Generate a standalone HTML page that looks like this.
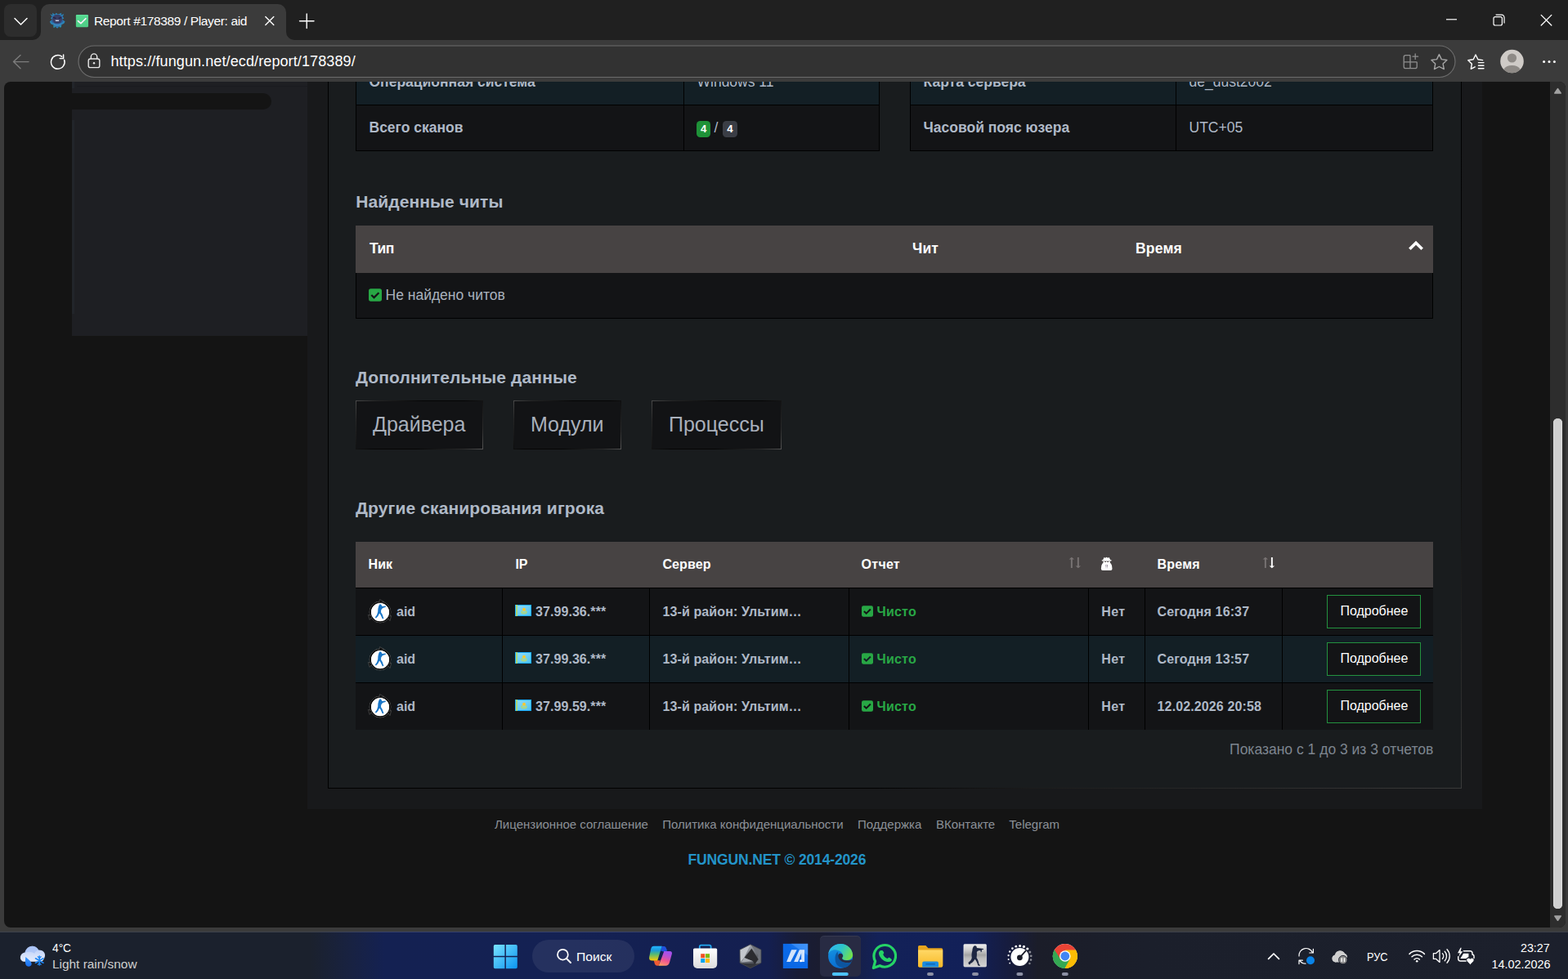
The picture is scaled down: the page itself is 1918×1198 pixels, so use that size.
<!DOCTYPE html>
<html lang="ru">
<head>
<meta charset="utf-8">
<title>Report #178389 / Player: aid</title>
<style>
*{box-sizing:border-box;margin:0;padding:0}
html,body{width:1918px;height:1198px;overflow:hidden;background:#3b3b3b;font-family:"Liberation Sans",Arial,sans-serif}
#root{position:relative;width:1918px;height:1198px;overflow:hidden}
#root div,#root span,#root svg,#root a,#root h4,#root button{position:absolute;display:block}
.t{white-space:nowrap;line-height:1;text-decoration:none}
svg{overflow:visible}
</style>
</head>
<body>
<div id="root">

<div style="left:0px;top:0px;width:1918px;height:49px;background:#202020;"></div>
<div style="left:0px;top:49px;width:1918px;height:1091px;background:#3b3b3b;"></div>
<div style="left:5px;top:5px;width:40px;height:40px;background:#2d2d2d;border-radius:8px;"></div>
<svg style="left:0;top:0" width="1918" height="100" viewBox="0 0 1918 100">
<path d="M40 49 A10 10 0 0 0 50 39 V15 A10 10 0 0 1 60 5 H340 A10 10 0 0 1 350 15 V39 A10 10 0 0 0 360 49 Z" fill="#3b3b3b"/>
<!-- chevron -->
<path d="M18 22.5 L25.5 30 L33 22.5" fill="none" stroke="#fff" stroke-width="1.5" stroke-linecap="round" stroke-linejoin="round"/>
<!-- favicon -->
<g transform="translate(52 8) scale(0.036496)">
<path d="M255 250 L340 290 L330 215 L420 265 L455 215 L520 260 L640 215 L620 285 L715 250 L680 340 L720 400 L650 430 L755 500 L720 570 L640 610 L625 700 L560 670 L495 730 L430 680 L365 710 L370 620 L280 580 L240 510 L330 430 L270 390 L320 340 Z" fill="#2a8cc4" opacity=".9"/>
<path d="M300 300 L380 330 L400 260 L495 300 L590 260 L610 330 L690 300 L650 400 L700 500 L620 560 L600 660 L495 690 L390 660 L370 560 L290 500 L340 400 Z" fill="#2e5f9e"/>
<ellipse cx="495" cy="420" rx="165" ry="150" fill="#3a3f66"/>
<path d="M360 370 L450 395 M630 370 L540 395" stroke="#231f3a" stroke-width="34"/>
<path d="M425 450 H555 L545 495 H440 Z" fill="#c9d2e4"/>
<path d="M350 545 Q495 640 640 545 L600 640 Q495 700 390 640 Z" fill="#3b86bd"/>
<path d="M365 640 L395 715 L430 660 Z M625 640 L595 715 L560 660 Z" fill="#2a9c9c"/>
</g>
<!-- green check emoji -->
<g transform="translate(52 8) scale(0.036496)">
<defs><linearGradient id="gchk" x1="0" y1="0" x2="0" y2="1"><stop offset="0" stop-color="#5fe09b"/><stop offset=".2" stop-color="#53d68d"/><stop offset="1" stop-color="#4fcd86"/></linearGradient></defs>
<rect x="1120" y="275" width="415" height="415" rx="30" fill="url(#gchk)"/>
<path d="M1190 482 L1285 566 L1452 402" fill="none" stroke="#fdeffa" stroke-width="42" stroke-linecap="round" stroke-linejoin="round"/>
</g>
<!-- tab close -->
<path d="M324.8 20.5 L334.8 30.5 M334.8 20.5 L324.8 30.5" stroke="#fff" stroke-width="1.4" stroke-linecap="round"/>
<!-- new tab -->
<path d="M366.5 25.7 H384 M375.2 17 V34.5" stroke="#fff" stroke-width="1.4" stroke-linecap="round"/>
<!-- window controls -->
<path d="M1769 23.8 H1782" stroke="#fff" stroke-width="1.2"/>
<rect x="1827" y="20.6" width="10.4" height="10.4" rx="2" fill="none" stroke="#fff" stroke-width="1.2"/>
<path d="M1829.6 18.2 H1837 A3 3 0 0 1 1840 21.2 V28.6" fill="none" stroke="#fff" stroke-width="1.2"/>
<path d="M1885.2 18.4 L1897.8 31 M1897.8 18.4 L1885.2 31" stroke="#fff" stroke-width="1.3" stroke-linecap="round"/>
<!-- back -->
<path d="M35 75.6 H16.5 M25 67.4 L16.5 75.6 L25 83.8" fill="none" stroke="#7d7d7d" stroke-width="1.4" stroke-linecap="round" stroke-linejoin="round"/>
<!-- reload -->
<path d="M78.6 73.2 A8.3 8.3 0 1 1 75.6 69.2" fill="none" stroke="#fff" stroke-width="1.5" stroke-linecap="round"/>
<path d="M77.6 67 V71.4 H73.2" fill="none" stroke="#fff" stroke-width="1.5" stroke-linecap="round" stroke-linejoin="round"/>
<!-- url bar -->
<rect x="96" y="56" width="1684" height="38.5" rx="19.25" fill="#323232" stroke="#6c6c6c" stroke-width="1.2"/>
<!-- lock -->
<rect x="108.2" y="72" width="13.6" height="10.6" rx="2.2" fill="none" stroke="#e8e8e8" stroke-width="1.4"/>
<path d="M111.3 72 V69.6 A3.7 3.7 0 0 1 118.7 69.6 V72" fill="none" stroke="#e8e8e8" stroke-width="1.4"/>
<circle cx="115" cy="77.3" r="1.2" fill="#e8e8e8"/>
<!-- apps-add -->
<g fill="none" stroke="#8f8f8f" stroke-width="1.3" stroke-linejoin="round">
<path d="M1725 67.6 H1719.4 A2.2 2.2 0 0 0 1717.2 69.8 V81.4 A2.2 2.2 0 0 0 1719.4 83.6 H1731 A2.2 2.2 0 0 0 1733.2 81.4 V75.8"/>
<path d="M1725 67.6 V83.6 M1717.2 75.8 H1733.2"/>
<path d="M1731.2 66 V72.4 M1728 69.2 H1734.6" stroke-linecap="round"/>
</g>
<!-- star -->
<path d="M1760.4 66.6 L1763.3 72.6 L1769.9 73.5 L1765.1 78.1 L1766.3 84.6 L1760.4 81.5 L1754.5 84.6 L1755.7 78.1 L1750.9 73.5 L1757.5 72.6 Z" fill="none" stroke="#a6a6a6" stroke-width="1.4" stroke-linejoin="round"/>
<!-- favorites -->
<path d="M1805 67 L1807.9 72.8 L1813.6 73.6 M1805 67 L1802.2 72.8 L1795.8 73.7 L1800.4 78.2 L1799.3 84.4 L1804.2 81.8" fill="none" stroke="#fff" stroke-width="1.4" stroke-linejoin="round" stroke-linecap="round"/>
<path d="M1808.4 76.6 H1815 M1808.4 80.2 H1815 M1808.4 83.8 H1815" stroke="#fff" stroke-width="1.4" stroke-linecap="round"/>
<!-- avatar -->
<circle cx="1849.5" cy="75" r="14.3" fill="#cfcbc7"/>
<circle cx="1849.5" cy="71" r="5.6" fill="#8e8a86"/>
<path d="M1839.3 85 A11 8 0 0 1 1859.7 85 A14.3 14.3 0 0 1 1839.3 85 Z" fill="#8e8a86"/>
<!-- dots -->
<circle cx="1888.6" cy="75.5" r="1.5" fill="#fff"/><circle cx="1895" cy="75.5" r="1.5" fill="#fff"/><circle cx="1901.4" cy="75.5" r="1.5" fill="#fff"/>
</svg>
<div class="t" style="top:18.00px;font-size:15.5px;color:#fff;left:115px;letter-spacing:-0.37px;">Report #178389 / Player: aid</div>
<div class="t" style="top:66.00px;font-size:18px;color:#fff;left:135.5px;letter-spacing:0.11px;">https://fungun.net/ecd/report/178389/</div>
<div id="page" style="left:5px;top:100px;width:1909.5px;height:1035px;background:#141414;border-radius:8px;overflow:hidden">
<div style="left:-5px;top:-100px;width:1918px;height:1198px">
<div style="left:88px;top:100px;width:288px;height:311px;background:#1e1f23;"></div>
<div style="left:88px;top:114px;width:244px;height:20px;background:#141414;border-radius:0 10px 10px 0;"></div>
<div style="left:88px;top:100px;width:3px;height:8px;background:#22252a;"></div>
<div style="left:88px;top:147px;width:3px;height:237px;background:#22252a;"></div>
<div style="left:94px;top:105px;width:282px;height:1px;background:#1a1b1f;"></div>
<div style="left:376px;top:100px;width:1437px;height:890px;background:#18191b;"></div>
<div style="left:401px;top:90px;width:1387px;height:875px;background:#191c1e;border:1px solid #000;"></div>
<div style="left:401px;top:964px;width:1387px;height:1px;background:linear-gradient(90deg,#000 0%,#000 48%,#1c1c1c 62%,#3a3a3a 100%);"></div>
<div style="left:1787px;top:100px;width:1px;height:865px;background:linear-gradient(180deg,#000 0%,#050505 45%,#1c1c1c 70%,#3a3a3a 100%);"></div>
<div style="left:1896px;top:100px;width:19px;height:1035px;background:#2d2d2d;"></div>
<div style="left:1900px;top:512px;width:11px;height:600px;background:#d1d1d1;border-radius:5.5px;box-shadow:inset 1px 0 0 #dcdcdc,inset -1px 0 0 #dcdcdc;"></div>
<svg style="left:1896px;top:100px" width="19" height="1035" viewBox="0 0 19 1035">
<path d="M5.9 14 L9.5 8.7 L13.1 14 Z" fill="#a2a2a2" stroke="#a2a2a2" stroke-width="1.7" stroke-linejoin="round"/>
<path d="M5.9 1021 L9.5 1026.2 L13.1 1021 Z" fill="#a2a2a2" stroke="#a2a2a2" stroke-width="1.7" stroke-linejoin="round"/>
</svg>
<div style="left:435px;top:60px;width:641px;height:125px;background:#000;"></div>
<div style="left:436px;top:73px;width:400px;height:55px;background:#131f25;"></div>
<div style="left:837px;top:73px;width:238px;height:55px;background:#131f25;"></div>
<div style="left:436px;top:129px;width:400px;height:55px;background:#131416;"></div>
<div style="left:837px;top:129px;width:238px;height:55px;background:#131416;"></div>
<div class="t" style="top:92.00px;font-size:17.5px;color:#afb9c7;left:451.5px;font-weight:bold;">Операционная система</div>
<div class="t" style="top:92.00px;font-size:17.5px;color:#afb9c7;left:852.5px;">Windows 11</div>
<div class="t" style="top:148.00px;font-size:17.5px;color:#afb9c7;left:451.5px;font-weight:bold;">Всего сканов</div>
<div style="left:1113px;top:60px;width:640px;height:125px;background:#000;"></div>
<div style="left:1114px;top:73px;width:324px;height:55px;background:#131f25;"></div>
<div style="left:1439px;top:73px;width:313px;height:55px;background:#131f25;"></div>
<div style="left:1114px;top:129px;width:324px;height:55px;background:#131416;"></div>
<div style="left:1439px;top:129px;width:313px;height:55px;background:#131416;"></div>
<div class="t" style="top:92.00px;font-size:17.5px;color:#afb9c7;left:1129.5px;font-weight:bold;">Карта сервера</div>
<div class="t" style="top:92.00px;font-size:17.5px;color:#afb9c7;left:1454.5px;">de_dust2002</div>
<div class="t" style="top:148.00px;font-size:17.5px;color:#afb9c7;left:1129.5px;font-weight:bold;">Часовой пояс юзера</div>
<div class="t" style="top:148.00px;font-size:17.5px;color:#afb9c7;left:1454.5px;">UTC+05</div>
<div style="left:852px;top:148px;width:17px;height:20px;background:#1e9238;border-radius:4.5px;"></div>
<div class="t" style="top:151.00px;font-size:13.2px;color:#fff;left:857px;font-weight:bold;">4</div>
<div class="t" style="top:148.00px;font-size:17.5px;color:#afb9c7;left:873.6px;">/</div>
<div style="left:884px;top:148px;width:18px;height:20px;background:#3a3d45;border-radius:4.5px;"></div>
<div class="t" style="top:151.00px;font-size:13.2px;color:#fff;left:889.3px;font-weight:bold;">4</div>
<h4 class="t" style="top:236.00px;font-size:21px;color:#afb9c7;left:435.2px;font-weight:bold;letter-spacing:0.1px;">Найденные читы</h4>
<div style="left:435px;top:276px;width:1318px;height:58px;background:#474343;"></div>
<div style="left:435px;top:334px;width:1318px;height:56px;background:#000;"></div>
<div style="left:436px;top:334px;width:1316px;height:55px;background:#131416;"></div>
<div class="t" style="top:296.00px;font-size:17.5px;color:#fff;left:452px;font-weight:bold;letter-spacing:-0.5px;">Тип</div>
<div class="t" style="top:296.00px;font-size:17.5px;color:#fff;left:1116px;font-weight:bold;letter-spacing:0.1px;">Чит</div>
<div class="t" style="top:296.00px;font-size:17.5px;color:#fff;left:1389px;font-weight:bold;letter-spacing:0.2px;">Время</div>
<svg style="left:1722px;top:294px" width="20" height="16" viewBox="0 0 20 16"><path d="M10 0.8 L18.9 9.4 L16.4 12 L10 5.8 L3.6 12 L1.1 9.4 Z" fill="#fff"/></svg>
<svg style="left:451px;top:352.5px" width="16" height="16" viewBox="0 0 16 16"><rect x="0" y="0.3" width="16" height="15.4" rx="2.6" fill="#28a745"/><path d="M3.3 8 L6.5 11.1 L12.4 5.2" fill="none" stroke="#131416" stroke-width="2.3" stroke-linecap="butt" stroke-linejoin="miter"/></svg>
<div class="t" style="top:353.00px;font-size:17.5px;color:#a9b1bd;left:471.5px;">Не найдено читов</div>
<h4 class="t" style="top:451.00px;font-size:21px;color:#afb9c7;left:435px;font-weight:bold;letter-spacing:0.12px;">Дополнительные данные</h4>
<div style="left:435px;top:490px;width:156px;height:60px;background:linear-gradient(135deg,#4a4a4a 0%,#262626 12%,#050505 38%,#050505 62%,#2a2a2a 88%,#555 100%);"></div>
<div style="left:436px;top:491px;width:154px;height:58px;background:#121315;"></div>
<div class="t" style="top:507.00px;font-size:25px;color:#a9b0bb;left:456px;">Драйвера</div>
<div style="left:628px;top:490px;width:132px;height:60px;background:linear-gradient(135deg,#4a4a4a 0%,#262626 12%,#050505 38%,#050505 62%,#2a2a2a 88%,#555 100%);"></div>
<div style="left:629px;top:491px;width:130px;height:58px;background:#121315;"></div>
<div class="t" style="top:507.00px;font-size:25px;color:#a9b0bb;left:649px;">Модули</div>
<div style="left:797px;top:490px;width:159px;height:60px;background:linear-gradient(135deg,#4a4a4a 0%,#262626 12%,#050505 38%,#050505 62%,#2a2a2a 88%,#555 100%);"></div>
<div style="left:798px;top:491px;width:157px;height:58px;background:#121315;"></div>
<div class="t" style="top:507.00px;font-size:25px;color:#a9b0bb;left:818px;">Процессы</div>
<h4 class="t" style="top:611.00px;font-size:21px;color:#afb9c7;left:435px;font-weight:bold;letter-spacing:0.12px;">Другие сканирования игрока</h4>
<div style="left:435px;top:663px;width:1318px;height:56px;background:#474343;"></div>
<div style="left:435px;top:719px;width:1318px;height:174px;background:#000;"></div>
<div style="left:435px;top:720px;width:179px;height:57px;background:#131416;"></div>
<div style="left:615px;top:720px;width:179px;height:57px;background:#131416;"></div>
<div style="left:795px;top:720px;width:243px;height:57px;background:#131416;"></div>
<div style="left:1039px;top:720px;width:292px;height:57px;background:#131416;"></div>
<div style="left:1332px;top:720px;width:68px;height:57px;background:#131416;"></div>
<div style="left:1401px;top:720px;width:167px;height:57px;background:#131416;"></div>
<div style="left:1569px;top:720px;width:184px;height:57px;background:#131416;"></div>
<div style="left:435px;top:778px;width:179px;height:57px;background:#131f25;"></div>
<div style="left:615px;top:778px;width:179px;height:57px;background:#131f25;"></div>
<div style="left:795px;top:778px;width:243px;height:57px;background:#131f25;"></div>
<div style="left:1039px;top:778px;width:292px;height:57px;background:#131f25;"></div>
<div style="left:1332px;top:778px;width:68px;height:57px;background:#131f25;"></div>
<div style="left:1401px;top:778px;width:167px;height:57px;background:#131f25;"></div>
<div style="left:1569px;top:778px;width:184px;height:57px;background:#131f25;"></div>
<div style="left:435px;top:836px;width:179px;height:57px;background:#131416;"></div>
<div style="left:615px;top:836px;width:179px;height:57px;background:#131416;"></div>
<div style="left:795px;top:836px;width:243px;height:57px;background:#131416;"></div>
<div style="left:1039px;top:836px;width:292px;height:57px;background:#131416;"></div>
<div style="left:1332px;top:836px;width:68px;height:57px;background:#131416;"></div>
<div style="left:1401px;top:836px;width:167px;height:57px;background:#131416;"></div>
<div style="left:1569px;top:836px;width:184px;height:57px;background:#131416;"></div>
<div class="t" style="top:683.00px;font-size:16px;color:#fff;left:450.6px;font-weight:bold;">Ник</div>
<div class="t" style="top:683.00px;font-size:16px;color:#fff;left:630.4px;font-weight:bold;">IP</div>
<div class="t" style="top:683.00px;font-size:16px;color:#fff;left:810.4px;font-weight:bold;letter-spacing:0.12px;">Сервер</div>
<div class="t" style="top:683.00px;font-size:16px;color:#fff;left:1053.6px;font-weight:bold;letter-spacing:0.25px;">Отчет</div>
<div class="t" style="top:683.00px;font-size:16px;color:#fff;left:1415.6px;font-weight:bold;letter-spacing:0.22px;">Время</div>
<svg style="left:1307.15px;top:681px" width="16" height="16" viewBox="0 0 16 16"><path d="M2.9 14 V3.6 H0.6 L3.85 0.8 L7.1 3.6 H4.8 V14 Z" fill="#787373"/><path d="M10.9 1 V11.4 H8.6 L11.85 14.2 L15.1 11.4 H12.8 V1 Z" fill="#787373"/></svg>
<svg style="left:1544.15px;top:681px" width="16" height="16" viewBox="0 0 16 16"><path d="M2.9 14 V3.6 H0.6 L3.85 0.8 L7.1 3.6 H4.8 V14 Z" fill="#787373"/><path d="M10.9 1 V11.4 H8.6 L11.85 14.2 L15.1 11.4 H12.8 V1 Z" fill="#ffffff"/></svg>
<svg style="left:1300px;top:672px" width="72" height="36" viewBox="0 0 1918 959">
<path d="M1345 268 L1385 286 L1428 260 L1470 286 L1510 268 L1548 348 L1592 360 L1580 388 L1278 388 L1268 360 L1312 348 Z" fill="#fff"/>
<path d="M1318 392 H1542 V432 Q1540 470 1500 482 H1360 Q1320 470 1318 432 Z" fill="#fff"/>
<path d="M1368 400 h46 v26 h-46 z M1446 400 h46 v26 h-46 z" fill="#57504f"/>
<path d="M1335 448 L1292 468 Q1248 525 1248 640 Q1248 690 1300 690 H1560 Q1612 690 1612 640 Q1612 525 1568 468 L1525 448 L1430 486 Z" fill="#fff"/>
<path d="M1392 505 L1422 520 L1412 640 Z M1468 505 L1438 520 L1448 640 Z" fill="#8a7f90"/>
</svg>
<svg style="left:450px;top:733.8px" width="30" height="30" viewBox="-15 -15 30 30">
<circle r="12.9" fill="none" stroke="#6f6f6f" stroke-width="0.9"/>
<circle r="11.9" fill="#fff" stroke="#0c0c0c" stroke-width="1.9"/>
<path d="M-0.4 -15.4 L4.6 -12.6 L-1.6 -10.8 Z M13.6 4.6 L12 10.6 L8.2 5.6 Z M-14.6 3.4 L-9.6 5 L-12.8 9.4 Z" fill="#0c0c0c" stroke="#6f6f6f" stroke-width="0.5"/>
<circle r="11" cy="0.2" fill="#fff"/>
<path d="M-0.8 -9.4 L1 -9.6 L1.8 -8.2 L2.4 -7 L7 -7.4 L6.6 -6 L3.8 -5.2 L2.4 -4.2 L1.2 -2.4 L1 0.2 L2.8 3.2 L4.4 8 L2.8 8.2 L0.6 3.6 L-0.8 1.6 L-2.6 5 L-5 7.4 L-6.2 6.4 L-4 3.4 L-2.8 -0.2 L-2.6 -4 L-1.8 -7.2 Z" fill="#1976c8"/>
</svg>
<div class="t" style="top:741.00px;font-size:16px;color:#afb9c7;left:485px;font-weight:bold;">aid</div>
<svg style="left:630px;top:740px" width="20" height="14" viewBox="0 0 20 14">
<defs><linearGradient id="gfl" x1="0" y1="0" x2="1" y2="1"><stop offset="0" stop-color="#8fdcfc"/><stop offset="1" stop-color="#50c4f4"/></linearGradient></defs>
<rect width="20" height="14" fill="#19adfe"/>
<rect x="1" y="1" width="18" height="12" fill="url(#gfl)"/>
<rect x="1.2" y="0" width="1.7" height="14" fill="#b3d860"/>
<ellipse cx="11" cy="9.1" rx="3.8" ry="2.5" fill="#b4d873" opacity=".85"/>
<ellipse cx="11" cy="8.2" rx="2.2" ry="1.3" fill="#7fd2f0" opacity=".6"/>
<circle cx="11" cy="5.7" r="2" fill="#fcc830"/>
</svg>
<div class="t" style="top:741.00px;font-size:16px;color:#afb9c7;left:655px;font-weight:bold;letter-spacing:0.07px;">37.99.36.***</div>
<div class="t" style="top:741.00px;font-size:16px;color:#afb9c7;left:810.6px;font-weight:bold;letter-spacing:0.1px;">13-й район: Ультим…</div>
<svg style="left:1054px;top:741px" width="14" height="14" viewBox="0 0 16 16"><rect x="0" y="0.3" width="16" height="15.4" rx="2.6" fill="#28a745"/><path d="M3.3 8 L6.5 11.1 L12.4 5.2" fill="none" stroke="#131416" stroke-width="2.3" stroke-linecap="butt" stroke-linejoin="miter"/></svg>
<div class="t" style="top:741.00px;font-size:16px;color:#28a745;left:1072.5px;font-weight:bold;letter-spacing:0.2px;">Чисто</div>
<div class="t" style="top:741.00px;font-size:16px;color:#afb9c7;left:1347.3px;font-weight:bold;letter-spacing:0.35px;">Нет</div>
<div class="t" style="top:741.00px;font-size:16px;color:#afb9c7;left:1415.6px;font-weight:bold;letter-spacing:0.12px;">Сегодня 16:37</div>
<div style="left:1623px;top:728px;width:115px;height:41px;background:#131416;border:1px solid #23923f;"></div>
<a class="t" style="top:740.00px;font-size:16px;color:#fff;left:1639.4px;">Подробнее</a>
<svg style="left:450px;top:791.8px" width="30" height="30" viewBox="-15 -15 30 30">
<circle r="12.9" fill="none" stroke="#6f6f6f" stroke-width="0.9"/>
<circle r="11.9" fill="#fff" stroke="#0c0c0c" stroke-width="1.9"/>
<path d="M-0.4 -15.4 L4.6 -12.6 L-1.6 -10.8 Z M13.6 4.6 L12 10.6 L8.2 5.6 Z M-14.6 3.4 L-9.6 5 L-12.8 9.4 Z" fill="#0c0c0c" stroke="#6f6f6f" stroke-width="0.5"/>
<circle r="11" cy="0.2" fill="#fff"/>
<path d="M-0.8 -9.4 L1 -9.6 L1.8 -8.2 L2.4 -7 L7 -7.4 L6.6 -6 L3.8 -5.2 L2.4 -4.2 L1.2 -2.4 L1 0.2 L2.8 3.2 L4.4 8 L2.8 8.2 L0.6 3.6 L-0.8 1.6 L-2.6 5 L-5 7.4 L-6.2 6.4 L-4 3.4 L-2.8 -0.2 L-2.6 -4 L-1.8 -7.2 Z" fill="#1976c8"/>
</svg>
<div class="t" style="top:799.00px;font-size:16px;color:#afb9c7;left:485px;font-weight:bold;">aid</div>
<svg style="left:630px;top:798px" width="20" height="14" viewBox="0 0 20 14">
<defs><linearGradient id="gfl" x1="0" y1="0" x2="1" y2="1"><stop offset="0" stop-color="#8fdcfc"/><stop offset="1" stop-color="#50c4f4"/></linearGradient></defs>
<rect width="20" height="14" fill="#19adfe"/>
<rect x="1" y="1" width="18" height="12" fill="url(#gfl)"/>
<rect x="1.2" y="0" width="1.7" height="14" fill="#b3d860"/>
<ellipse cx="11" cy="9.1" rx="3.8" ry="2.5" fill="#b4d873" opacity=".85"/>
<ellipse cx="11" cy="8.2" rx="2.2" ry="1.3" fill="#7fd2f0" opacity=".6"/>
<circle cx="11" cy="5.7" r="2" fill="#fcc830"/>
</svg>
<div class="t" style="top:799.00px;font-size:16px;color:#afb9c7;left:655px;font-weight:bold;letter-spacing:0.07px;">37.99.36.***</div>
<div class="t" style="top:799.00px;font-size:16px;color:#afb9c7;left:810.6px;font-weight:bold;letter-spacing:0.1px;">13-й район: Ультим…</div>
<svg style="left:1054px;top:799px" width="14" height="14" viewBox="0 0 16 16"><rect x="0" y="0.3" width="16" height="15.4" rx="2.6" fill="#28a745"/><path d="M3.3 8 L6.5 11.1 L12.4 5.2" fill="none" stroke="#131f25" stroke-width="2.3" stroke-linecap="butt" stroke-linejoin="miter"/></svg>
<div class="t" style="top:799.00px;font-size:16px;color:#28a745;left:1072.5px;font-weight:bold;letter-spacing:0.2px;">Чисто</div>
<div class="t" style="top:799.00px;font-size:16px;color:#afb9c7;left:1347.3px;font-weight:bold;letter-spacing:0.35px;">Нет</div>
<div class="t" style="top:799.00px;font-size:16px;color:#afb9c7;left:1415.6px;font-weight:bold;letter-spacing:0.12px;">Сегодня 13:57</div>
<div style="left:1623px;top:786px;width:115px;height:41px;background:#131416;border:1px solid #23923f;"></div>
<a class="t" style="top:798.00px;font-size:16px;color:#fff;left:1639.4px;">Подробнее</a>
<svg style="left:450px;top:849.8px" width="30" height="30" viewBox="-15 -15 30 30">
<circle r="12.9" fill="none" stroke="#6f6f6f" stroke-width="0.9"/>
<circle r="11.9" fill="#fff" stroke="#0c0c0c" stroke-width="1.9"/>
<path d="M-0.4 -15.4 L4.6 -12.6 L-1.6 -10.8 Z M13.6 4.6 L12 10.6 L8.2 5.6 Z M-14.6 3.4 L-9.6 5 L-12.8 9.4 Z" fill="#0c0c0c" stroke="#6f6f6f" stroke-width="0.5"/>
<circle r="11" cy="0.2" fill="#fff"/>
<path d="M-0.8 -9.4 L1 -9.6 L1.8 -8.2 L2.4 -7 L7 -7.4 L6.6 -6 L3.8 -5.2 L2.4 -4.2 L1.2 -2.4 L1 0.2 L2.8 3.2 L4.4 8 L2.8 8.2 L0.6 3.6 L-0.8 1.6 L-2.6 5 L-5 7.4 L-6.2 6.4 L-4 3.4 L-2.8 -0.2 L-2.6 -4 L-1.8 -7.2 Z" fill="#1976c8"/>
</svg>
<div class="t" style="top:857.00px;font-size:16px;color:#afb9c7;left:485px;font-weight:bold;">aid</div>
<svg style="left:630px;top:856px" width="20" height="14" viewBox="0 0 20 14">
<defs><linearGradient id="gfl" x1="0" y1="0" x2="1" y2="1"><stop offset="0" stop-color="#8fdcfc"/><stop offset="1" stop-color="#50c4f4"/></linearGradient></defs>
<rect width="20" height="14" fill="#19adfe"/>
<rect x="1" y="1" width="18" height="12" fill="url(#gfl)"/>
<rect x="1.2" y="0" width="1.7" height="14" fill="#b3d860"/>
<ellipse cx="11" cy="9.1" rx="3.8" ry="2.5" fill="#b4d873" opacity=".85"/>
<ellipse cx="11" cy="8.2" rx="2.2" ry="1.3" fill="#7fd2f0" opacity=".6"/>
<circle cx="11" cy="5.7" r="2" fill="#fcc830"/>
</svg>
<div class="t" style="top:857.00px;font-size:16px;color:#afb9c7;left:655px;font-weight:bold;letter-spacing:0.07px;">37.99.59.***</div>
<div class="t" style="top:857.00px;font-size:16px;color:#afb9c7;left:810.6px;font-weight:bold;letter-spacing:0.1px;">13-й район: Ультим…</div>
<svg style="left:1054px;top:857px" width="14" height="14" viewBox="0 0 16 16"><rect x="0" y="0.3" width="16" height="15.4" rx="2.6" fill="#28a745"/><path d="M3.3 8 L6.5 11.1 L12.4 5.2" fill="none" stroke="#131416" stroke-width="2.3" stroke-linecap="butt" stroke-linejoin="miter"/></svg>
<div class="t" style="top:857.00px;font-size:16px;color:#28a745;left:1072.5px;font-weight:bold;letter-spacing:0.2px;">Чисто</div>
<div class="t" style="top:857.00px;font-size:16px;color:#afb9c7;left:1347.3px;font-weight:bold;letter-spacing:0.35px;">Нет</div>
<div class="t" style="top:857.00px;font-size:16px;color:#afb9c7;left:1415.6px;font-weight:bold;letter-spacing:0.12px;">12.02.2026 20:58</div>
<div style="left:1623px;top:844px;width:115px;height:41px;background:#131416;border:1px solid #23923f;"></div>
<a class="t" style="top:856.00px;font-size:16px;color:#fff;left:1639.4px;">Подробнее</a>
<div class="t" style="top:909.00px;font-size:17.5px;color:#7d858f;right:164.70000000000005px;">Показано с 1 до 3 из 3 отчетов</div>
<a class="t" style="top:1001.00px;font-size:15px;color:#8b9097;left:605px;">Лицензионное соглашение</a>
<a class="t" style="top:1001.00px;font-size:15px;color:#8b9097;left:810.3px;">Политика конфиденциальности</a>
<a class="t" style="top:1001.00px;font-size:15px;color:#8b9097;left:1049px;">Поддержка</a>
<a class="t" style="top:1001.00px;font-size:15px;color:#8b9097;left:1145px;">ВКонтакте</a>
<a class="t" style="top:1001.00px;font-size:15px;color:#8b9097;left:1234.3px;">Telegram</a>
<div class="t" style="top:1044.00px;font-size:17.5px;color:#2394c9;left:841.5px;font-weight:bold;letter-spacing:-0.15px;">FUNGUN.NET © 2014-2026</div>
</div></div>
<div style="left:0px;top:1140px;width:1918px;height:58px;background:linear-gradient(90deg,#1b212d 0.00%,#1b212d 19.81%,#182242 22.42%,#142152 24.50%,#142153 36.50%,#141f50 49.01%,#181c36 50.83%,#1a1c30 52.29%,#15204c 54.90%,#132158 56.05%,#122058 62.04%,#161c40 64.13%,#1b1d29 66.21%,#1b1f2b 73%,#1c202c 100%);"></div>
<div style="left:0px;top:1140px;width:1918px;height:1px;background:rgba(255,255,255,0.15);"></div>
<div style="left:651px;top:1150px;width:125px;height:40px;background:rgba(255,255,255,0.075);border-radius:20px;"></div>
<div style="left:1003px;top:1145px;width:50px;height:50px;background:#282b43;border-radius:5px;box-shadow:inset 0 1px 0 rgba(255,255,255,0.07);"></div>
<svg style="left:0;top:1140px" width="1918" height="58" viewBox="0 1140 1918 58">
<defs>
<linearGradient id="gw" x1="0" y1="0" x2="1" y2="1"><stop offset="0" stop-color="#79e3ff"/><stop offset="1" stop-color="#0c95f0"/></linearGradient>
<linearGradient id="gcloud" x1="0" y1="0" x2="0" y2="1"><stop offset="0" stop-color="#b4caf8"/><stop offset=".6" stop-color="#d4e0fa"/><stop offset="1" stop-color="#e6ecfb"/></linearGradient>
<linearGradient id="gdrop" x1="0" y1="0" x2="0" y2="1"><stop offset="0" stop-color="#3b9bff"/><stop offset="1" stop-color="#1a6ef0"/></linearGradient>
<linearGradient id="gcop" x1="0" y1="0" x2="0" y2="1"><stop offset="0" stop-color="#22b4ff"/><stop offset=".3" stop-color="#1b9ad8"/><stop offset=".55" stop-color="#52b878"/><stop offset=".78" stop-color="#a8c23c"/><stop offset="1" stop-color="#fccc04"/></linearGradient>
<linearGradient id="gcop2" x1="0.3" y1="0" x2="0" y2="1"><stop offset="0" stop-color="#a550ec"/><stop offset=".3" stop-color="#c452c4"/><stop offset=".55" stop-color="#f0568e"/><stop offset=".8" stop-color="#f8807a"/><stop offset="1" stop-color="#ffb44c"/></linearGradient>
<linearGradient id="gbag" x1="0" y1="0" x2="0" y2="1"><stop offset="0" stop-color="#ffffff"/><stop offset="1" stop-color="#dcdcdc"/></linearGradient>
<linearGradient id="ghex" x1="0" y1="0" x2="0.6" y2="1"><stop offset="0" stop-color="#d0d4da"/><stop offset=".5" stop-color="#7b7f87"/><stop offset="1" stop-color="#3b3e44"/></linearGradient>
<linearGradient id="gma" x1="0" y1="1" x2="1" y2="0"><stop offset="0" stop-color="#0a66e2"/><stop offset=".55" stop-color="#0b6ae8"/><stop offset="1" stop-color="#2f86f6"/></linearGradient>
<linearGradient id="gedge" x1="0" y1="0" x2="0.3" y2="1"><stop offset="0" stop-color="#1b9de2"/><stop offset=".5" stop-color="#0f83dc"/><stop offset="1" stop-color="#0a6ed0"/></linearGradient>
<linearGradient id="gedge2" x1="0" y1="0.2" x2="1" y2="0.6"><stop offset="0" stop-color="#30b4f4"/><stop offset=".5" stop-color="#2dc4c8"/><stop offset=".8" stop-color="#56d680"/><stop offset="1" stop-color="#74e04a"/></linearGradient>
<linearGradient id="gfold" x1="0" y1="0" x2="0" y2="1"><stop offset="0" stop-color="#ffd866"/><stop offset="1" stop-color="#f7b928"/></linearGradient>
<linearGradient id="gcs" x1="0" y1="0" x2="0" y2="1"><stop offset="0" stop-color="#ededed"/><stop offset=".25" stop-color="#cfcfcf"/><stop offset=".48" stop-color="#a4a4a4"/><stop offset=".62" stop-color="#bcbcbc"/><stop offset="1" stop-color="#d4d4d4"/></linearGradient>
</defs>
<!-- weather -->
<g transform="translate(18 1148) scale(0.04171)">
<path d="M300 690 C210 690 165 640 165 570 C165 490 225 430 300 420 C330 300 420 232 510 232 C600 232 660 270 700 350 C800 340 888 410 888 500 C888 560 860 640 790 690 Z" fill="url(#gcloud)"/>
<path d="M300 420 C330 300 420 232 510 232 C600 232 660 270 700 350 C640 360 600 400 580 450 C520 400 400 380 300 420 Z" fill="#9fbcf6" opacity=".55"/>
<path d="M318 552 C310 640 305 720 320 770 C345 850 470 860 495 770 C505 700 420 640 318 552 Z" fill="url(#gdrop)"/>
<g stroke="#1f86f2" stroke-width="40" stroke-linecap="round" fill="none"><path d="M725 530 V790 M612 595 L838 725 M838 595 L612 725"/><path d="M680 545 L725 585 L770 545 M680 775 L725 735 L770 775" stroke-width="30"/></g>
</g>
<!-- windows logo -->
<path d="M605.5 1156 H617.4 V1169.8 H603.8 V1157.7 A1.7 1.7 0 0 1 605.5 1156 Z M618.9 1156 H631.1 A1.7 1.7 0 0 1 632.8 1157.7 V1169.8 H618.9 Z M603.8 1171.3 H617.4 V1185.2 H605.5 A1.7 1.7 0 0 1 603.8 1183.5 Z M618.9 1171.3 H632.8 V1183.5 A1.7 1.7 0 0 1 631.1 1185.2 H618.9 Z" fill="url(#gw)"/>
<!-- search icon -->
<circle cx="688.4" cy="1168.2" r="6.4" fill="none" stroke="#fff" stroke-width="1.7"/>
<path d="M693 1173 L698 1178" stroke="#fff" stroke-width="1.9" stroke-linecap="round"/>
<!-- copilot -->
<path d="M809.7 1158 H812.6 Q814 1158 814.6 1159.6 L816.2 1163.6 L811.7 1164.4 L808 1163.6 Z" fill="#1f52dc"/>
<path d="M799.7 1175.2 H807.6 L805.7 1181.7 H803.8 Q801.8 1181.7 800.9 1179.4 Z" fill="#ee5a34"/>
<path d="M799.8 1157.8 H809.8 L804.2 1175.5 H798 Q793.3 1175.5 794.2 1171 L796.2 1161.2 Q797 1157.8 799.8 1157.8 Z" fill="url(#gcop)"/>
<path d="M812.3 1164 H819.2 Q822.7 1164 821.8 1167.6 L819 1177.8 Q817.8 1181.7 814.2 1181.7 H805.7 Z" fill="url(#gcop2)"/>
<!-- store -->
<path d="M855.8 1161.4 V1158.4 A1.8 1.8 0 0 1 857.6 1156.6 H867.8 A1.8 1.8 0 0 1 869.6 1158.4 V1161.4" fill="none" stroke="#23a8f2" stroke-width="1.8"/>
<path d="M849.6 1160.4 H875.6 A1.6 1.6 0 0 1 877.2 1162 V1180 A5 5 0 0 1 872.2 1185 H853 A5 5 0 0 1 848 1180 V1162 A1.6 1.6 0 0 1 849.6 1160.4 Z" fill="url(#gbag)"/>
<rect x="857.2" y="1167.2" width="5" height="5" fill="#f25022"/><rect x="863" y="1167.2" width="5" height="5" fill="#7fba00"/>
<rect x="857.2" y="1173" width="5" height="5" fill="#00a4ef"/><rect x="863" y="1173" width="5" height="5" fill="#ffb900"/>
<!-- hex -->
<g transform="translate(893 1145) scale(0.05735)">
<path d="M435 188 L662 300 V580 L435 692 L210 580 V300 Z" fill="url(#ghex)"/>
<path d="M435 188 L662 300 V580 L540 640 L600 420 Z" fill="#6f737b"/>
<path d="M210 300 L435 188 L300 470 L225 560 Z" fill="#c3c7cd"/>
<path d="M210 580 L435 692 L662 580 L560 600 L300 590 Z" fill="#33353a"/>
<path d="M460 275 L605 505 L520 610 L490 545 L305 472 Z" fill="#2b2c30"/>
<path d="M305 472 L490 545 L240 565 Z" fill="#a9adb3"/>
<path d="M435 188 L662 300 V580 L435 692 L210 580 V300 Z" fill="none" stroke="#45474c" stroke-width="14"/>
</g>
<!-- MA blue -->
<g transform="translate(893 1145) scale(0.05735)">
<rect x="1130" y="172" width="530" height="526" fill="url(#gma)"/>
<path d="M1300 172 L1660 172 L1660 420 Z" fill="#5aa6ff" opacity=".45"/>
<path d="M1310 300 H1425 L1290 556 H1205 Z" fill="#fff" opacity=".82"/>
<path d="M1480 300 H1588 V556 H1520 V370 L1450 556 H1362 Z" fill="#fff" opacity=".8"/>
<circle cx="1510" cy="536" r="27" fill="#fff"/>
</g>
<!-- edge -->
<g transform="translate(1003 1145) scale(0.041736)">
<circle cx="602" cy="598" r="360" fill="url(#gedge)"/>
<path d="M520 470 C440 540 420 700 480 830 C540 930 700 960 800 910 C860 880 900 830 915 775 C860 800 760 810 680 770 C600 730 540 660 530 590 Z" fill="#0c55a0"/>
<path d="M243 540 C260 360 420 238 602 238 C800 238 950 380 962 560 C965 640 900 720 800 722 C720 724 650 700 650 660 C650 630 690 620 672 560 C650 480 560 420 450 412 C360 408 280 460 243 540 Z" fill="url(#gedge2)"/>
<path d="M600 520 C555 520 525 560 532 605 C545 690 620 760 720 785 C790 800 860 795 915 772 L950 690 C900 725 850 728 800 724 C720 722 652 705 648 662 C648 632 688 622 672 575 C660 540 635 520 600 520 Z" fill="#282b43"/>
</g>
<rect x="1017.8" y="1190" width="20" height="4" rx="2" fill="#4cc2ff"/>
<!-- whatsapp -->
<g transform="translate(1055 1145) scale(0.05735)">
<path d="M232 690 L272 545 A232 232 0 1 1 370 640 Z" fill="none" stroke="#25d366" stroke-width="56" stroke-linejoin="round"/>
<path d="M395 315 C360 320 340 360 352 400 C380 490 470 560 560 560 C600 558 630 535 625 505 L575 468 C560 462 545 475 535 490 C490 475 450 435 440 395 C455 385 462 372 455 355 L430 320 C420 312 408 312 395 315 Z" fill="#25d366"/>
</g>
<!-- explorer -->
<path d="M1123 1158.6 A1.6 1.6 0 0 1 1124.6 1157 H1132.4 L1135.4 1160.2 H1151.6 A1.6 1.6 0 0 1 1153.2 1161.8 V1181.8 A1.6 1.6 0 0 1 1151.6 1183.4 H1124.6 A1.6 1.6 0 0 1 1123 1181.8 Z" fill="#e8a51e"/>
<path d="M1123 1162.4 H1153.2 V1181.8 A1.6 1.6 0 0 1 1151.6 1183.4 H1124.6 A1.6 1.6 0 0 1 1123 1181.8 Z" fill="url(#gfold)"/>
<path d="M1128.2 1183.4 V1178.4 A2 2 0 0 1 1130.2 1176.4 H1146 A2 2 0 0 1 1148 1178.4 V1183.4 Z" fill="#1b8be0"/>
<rect x="1132.4" y="1179" width="11.4" height="1.4" fill="#0f64b4"/>
<!-- cs -->
<g transform="translate(1165 1145) scale(0.05735)">
<rect x="242" y="182" width="482" height="482" rx="22" fill="url(#gcs)" stroke="#f2f2f2" stroke-width="10"/>
<path d="M470 215 C500 205 525 225 520 262 L600 272 L662 278 L660 296 L628 302 L622 350 L606 352 L598 312 L545 322 L520 350 C525 400 520 440 515 470 C545 510 560 560 568 610 L592 628 L585 645 L545 635 C535 580 510 535 480 500 C455 545 425 575 385 595 L372 620 L345 605 L340 570 C380 545 405 510 415 470 C405 420 410 370 425 320 C425 280 440 235 470 215 Z" fill="#1e2742"/>
</g>
<!-- dial -->
<circle cx="1247.4" cy="1171" r="11" fill="#fff"/>
<circle cx="1247.4" cy="1171.8" r="3.4" fill="#1a1c28"/>
<path d="M1248.6 1170.4 L1254.6 1163.6" stroke="#1a1c28" stroke-width="1.8" stroke-linecap="round"/>
<g fill="#fff">
<circle cx="1235.2" cy="1178.6" r=".9"/><circle cx="1233.6" cy="1174" r="1"/><circle cx="1233.6" cy="1169.2" r="1.1"/><circle cx="1235.2" cy="1164.4" r="1.2"/><circle cx="1238.4" cy="1160.6" r="1.3"/><circle cx="1242.8" cy="1158.2" r="1.4"/><circle cx="1247.6" cy="1157.4" r="1.5"/><circle cx="1252.4" cy="1158.4" r="1.6"/><circle cx="1256.8" cy="1161" r="1.6"/>
</g>
<g fill="#8a8c94"><circle cx="1259.8" cy="1165" r="1.5"/><circle cx="1261.2" cy="1169.8" r="1.4"/><circle cx="1261" cy="1174.6" r="1.3"/><circle cx="1259.4" cy="1179" r="1.2"/></g>
<!-- chrome -->
<circle cx="1302.8" cy="1170" r="15" fill="#fff"/>
<path d="M1302.8 1170 L1289.8 1162.5 A15 15 0 0 1 1315.8 1162.5 Z" fill="#ea4335"/>
<path d="M1302.8 1170 L1315.8 1162.5 A15 15 0 0 1 1302.8 1185 Z" fill="#fbbc04"/>
<path d="M1302.8 1170 L1302.8 1185 A15 15 0 0 1 1289.8 1162.5 Z" fill="#34a853"/>
<path d="M1302.8 1163.2 H1315.4 A15 15 0 0 0 1289.8 1162.5 L1296.9 1173.4 Z" fill="#ea4335"/>
<path d="M1308.7 1173.4 L1302.4 1185 A15 15 0 0 0 1315.8 1162.5 H1302.8 Z" fill="#fbbc04"/>
<path d="M1296.9 1173.4 L1289.8 1162.5 A15 15 0 0 0 1302.4 1185 L1308.7 1173.4 Z" fill="#34a853"/>
<circle cx="1302.8" cy="1170" r="6.8" fill="#fff"/>
<circle cx="1302.8" cy="1170" r="5.4" fill="#4285f4"/>
<!-- indicators -->
<g fill="#8c90a4"><rect x="1134" y="1190" width="8" height="4" rx="2"/><rect x="1189" y="1190" width="8" height="4" rx="2"/><rect x="1243.4" y="1190" width="8" height="4" rx="2"/><rect x="1298.8" y="1190" width="8" height="4" rx="2"/></g>
<!-- tray -->
<path d="M1551.6 1173.4 L1558 1167 L1564.4 1173.4" fill="none" stroke="#fff" stroke-width="1.7" stroke-linecap="round" stroke-linejoin="round"/>
<g fill="none" stroke="#fff" stroke-width="1.2" stroke-linecap="round" stroke-linejoin="round">
<path d="M1589 1170 A8.6 8.6 0 0 1 1605.4 1165.6 M1606.4 1161.4 V1166 H1601.8"/>
<path d="M1597 1179.2 A8.6 8.6 0 0 1 1590 1175.6 M1589 1179.6 V1175.2 H1593.4"/>
</g>
<circle cx="1603" cy="1175.2" r="5" fill="#0a84e8"/>
<path d="M1633.4 1177.4 A4.6 4.6 0 0 1 1633 1168.4 A6.4 6.4 0 0 1 1645 1167 A4.4 4.4 0 0 1 1647.6 1172" fill="#cfcfcf"/>
<path d="M1633 1168.4 A6.4 6.4 0 0 1 1645 1167 A4.4 4.4 0 0 1 1647.6 1172 L1640 1177.4 H1633.4 A4.6 4.6 0 0 1 1633 1168.4 Z" fill="#cfcfcf"/>
<circle cx="1642.8" cy="1174.6" r="5.2" fill="#8d8d8d" stroke="#1b1f2b" stroke-width="1"/>
<path d="M1641.2 1172.2 V1177 M1644.4 1172.2 V1177" stroke="#fff" stroke-width="1.4"/>
<g fill="none" stroke="#fff" stroke-width="1.5" stroke-linecap="round">
<path d="M1724 1167.4 A13 13 0 0 1 1742.4 1167.4"/><path d="M1727 1170.8 A8.8 8.8 0 0 1 1739.4 1170.8"/><path d="M1730 1174 A4.6 4.6 0 0 1 1736.4 1174"/></g>
<circle cx="1733.2" cy="1176.2" r="1.3" fill="#fff"/>
<g fill="none" stroke="#fff" stroke-width="1.3" stroke-linejoin="round" stroke-linecap="round">
<path d="M1753.4 1166.6 H1756.6 L1761 1162.6 V1177.4 L1756.6 1173.4 H1753.4 Z"/>
<path d="M1764.4 1166.8 A4.6 4.6 0 0 1 1764.4 1173.2"/><path d="M1767.2 1164.2 A8.4 8.4 0 0 1 1767.2 1175.8"/><path d="M1770 1161.8 A12 12 0 0 1 1770 1178.2"/></g>
<g transform="translate(1715 1150) scale(0.05214)">
<path d="M1445 265 H1595 Q1650 265 1650 320 V345 Q1688 350 1688 390 V430" fill="none" stroke="#fff" stroke-width="27" stroke-linecap="round"/>
<path d="M1318 395 V445 Q1318 498 1372 498 H1500" fill="none" stroke="#fff" stroke-width="27" stroke-linecap="round"/>
<path d="M1440 322 H1562 V400 L1500 442 H1368 Z" fill="#fff"/>
<path d="M1372 186 L1306 312 H1358 L1328 402 L1424 272 H1372 L1394 186 Z" fill="#fff"/>
<path d="M1600 585 L1522 505 A48 48 0 0 1 1600 448 A48 48 0 0 1 1678 505 Z" fill="#fff" stroke="#1c202c" stroke-width="14"/>
</g>
</svg>
<div class="t" style="top:1152.00px;font-size:15.5px;color:#fff;left:64.4px;transform:scaleX(0.885);transform-origin:0 0;">4°C</div>
<div class="t" style="top:1172.00px;font-size:15.5px;color:#cfcfcf;left:64.2px;transform:scaleX(0.993);transform-origin:0 0;">Light rain/snow</div>
<div class="t" style="top:1163.00px;font-size:15.5px;color:#fff;left:705px;transform:scaleX(1.01);transform-origin:0 0;">Поиск</div>
<div class="t" style="top:1163.00px;font-size:15.5px;color:#fff;left:1672.4px;transform:scaleX(0.825);transform-origin:0 0;">РУС</div>
<div class="t" style="top:1152.00px;font-size:15.5px;color:#fff;right:21.799999999999955px;transform:scaleX(0.925);transform-origin:100% 0;">23:27</div>
<div class="t" style="top:1172.00px;font-size:15.5px;color:#fff;right:21.799999999999955px;transform:scaleX(0.93);transform-origin:100% 0;">14.02.2026</div>
</div>
</body>
</html>
